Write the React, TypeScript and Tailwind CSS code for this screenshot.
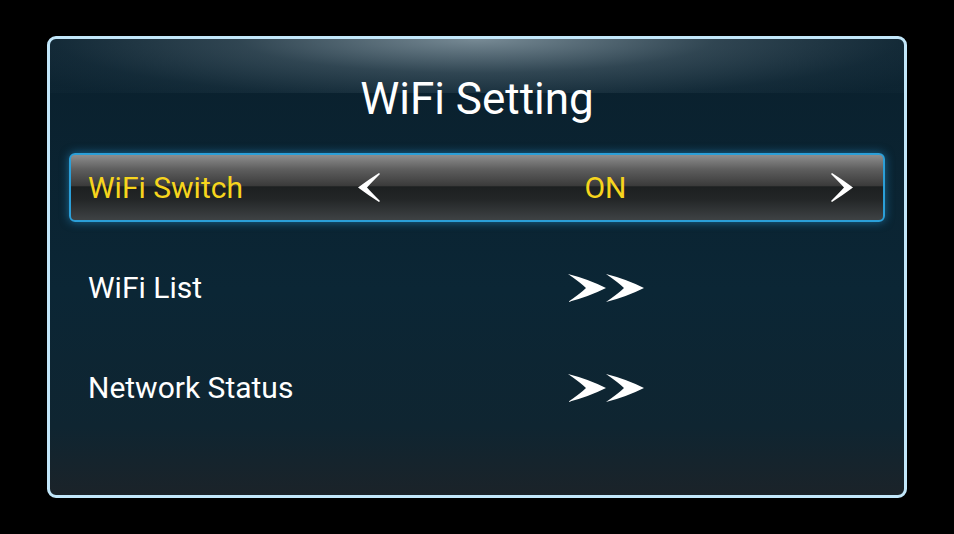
import React from 'react';

type MenuItem = {
  label: string;
  value?: string;
  selected?: boolean;
};

const items: MenuItem[] = [
  { label: 'WiFi Switch', value: 'ON', selected: true },
  { label: 'WiFi List' },
  { label: 'Network Status' },
];

const ChevronLeft = () => (
  <svg width="22" height="29" viewBox="0 0 22 29" className="block">
    <path d="M21 0 Q10 7 0 14.5 Q10 22 21 29 L22 28 Q14 20 9 14.5 Q14 9 22 1 Z" fill="#ffffff" />
  </svg>
);

const ChevronRight = () => (
  <svg width="22" height="29" viewBox="0 0 22 29" className="block">
    <path d="M1 0 Q12 7 22 14.5 Q12 22 1 29 L0 28 Q8 20 13 14.5 Q8 9 0 1 Z" fill="#ffffff" />
  </svg>
);

const DoubleArrow = () => (
  <svg width="76" height="28" viewBox="0 0 76 28" className="block">
    <path d="M0 0 Q20 5 38 14 Q20 23 0 28 Q13 19 18 14 Q13 9 0 0 Z" fill="#ffffff" />
    <path d="M38 0 Q58 5 76 14 Q58 23 38 28 Q51 19 56 14 Q51 9 38 0 Z" fill="#ffffff" />
  </svg>
);

const MenuRow = ({ item }: { item: MenuItem }) => {
  const rowClass = item.selected
    ? 'border-2 border-[#2b9fd8] rounded-[6px] bg-[linear-gradient(to_bottom,#8e8e8e_0%,#5e5e5e_22%,#3b3b3b_47%,#1d2021_49%,#232627_68%,#3e4244_100%)] shadow-[0_0_10px_rgba(40,160,225,0.55)]'
    : 'border-2 border-transparent';
  const textColor = item.selected ? 'text-[#f7d51d]' : 'text-white';

  return (
    <div className={`flex items-center h-[69px] ${rowClass}`}>
      <div className={`w-[287px] pl-[17px] text-[30px] leading-none ${textColor}`}>
        {item.label}
      </div>
      <div className="flex-1 mr-[30px] flex items-center justify-center h-full">
        {item.selected ? (
          <div className="flex items-center justify-between w-full">
            <ChevronLeft />
            <span className={`text-[30px] leading-none ${textColor}`}>{item.value}</span>
            <ChevronRight />
          </div>
        ) : (
          <DoubleArrow />
        )}
      </div>
    </div>
  );
};

export default function App() {
  return (
    <div
      className="w-[954px] h-[534px] bg-black pt-[36px] pl-[47px]"
      style={{ fontFamily: 'Roboto, "Noto Sans", sans-serif' }}
    >
      <div className="relative w-[860px] h-[462px] rounded-[9px] border-[3px] border-[#c2e7fa] overflow-hidden bg-[linear-gradient(to_bottom,#0a202d_0%,#0b2635_55%,#0f2531_85%,#1b2329_100%)]">
        {/* top glow */}
        <div className="absolute left-0 top-0 w-full h-[54px] pointer-events-none bg-[radial-gradient(ellipse_62%_140%_at_50%_0%,rgba(150,168,178,0.78)_0%,rgba(110,130,142,0.38)_45%,rgba(70,95,110,0.16)_80%,rgba(40,65,80,0.1)_100%)]" />
        <div className="relative flex flex-col">
          <h1 className="pt-[34px] text-center text-[44px] leading-[52px] text-white font-normal">
            WiFi Setting
          </h1>
          <div className="mt-[28px] mx-[19px] flex flex-col gap-[31px]">
            {items.map((item) => (
              <MenuRow key={item.label} item={item} />
            ))}
          </div>
        </div>
      </div>
    </div>
  );
}
